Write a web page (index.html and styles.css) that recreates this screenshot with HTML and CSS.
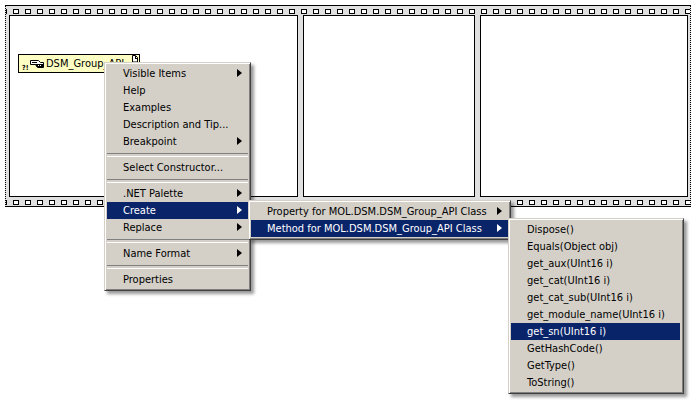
FILE: index.html
```html
<!DOCTYPE html>
<html>
    <head>
        <meta charset="utf-8">
        <title>DSM_Group_API</title>
        <link rel="stylesheet" href="styles.css">
    </head>
    <body>
        <div class="sequence">
            <div class="film"></div>
            <div class="frames">
                <div class="frame">
                    <div class="node">
                        <span class="nodeFlag">?!</span>
                        <svg class="nodeIcon" width="14" height="10" viewBox="0 0 14 10">
                            <path d="M0.5 1.5h8l2 2h3v5h-6l-2-3h-5z" fill="#fff" stroke="#000"/>
                            <path d="M5 5h8v3h-6zM2 3h5v1h-5z" fill="#000"/>
                            <path d="M8 6h1v1h-1zM10 6h1v1h-1z" fill="#fff"/>
                        </svg>
                        <span class="nodeName">DSM_Group_API</span>
                        <svg class="nodeDoc" width="7" height="8" viewBox="0 0 7 8">
                            <path d="M1.5 0.5h3l2 2v4.5h-5z" fill="#fff" stroke="#000"/>
                            <path d="M4 1h1v2h1v1h-2z" fill="#000"/>
                        </svg>
                    </div>
                </div>
                <div class="frame"></div>
                <div class="frame"></div>
            </div>
            <div class="film"></div>
        </div>

        <div class="menu mainMenu">
            <div class="item sub">Visible Items</div>
            <div class="item">Help</div>
            <div class="item">Examples</div>
            <div class="item">Description and Tip...</div>
            <div class="item sub">Breakpoint</div>
            <div class="sep"></div>
            <div class="item">Select Constructor...</div>
            <div class="sep"></div>
            <div class="item sub">.NET Palette</div>
            <div class="item sub active">Create</div>
            <div class="item sub">Replace</div>
            <div class="sep"></div>
            <div class="item sub">Name Format</div>
            <div class="sep"></div>
            <div class="item">Properties</div>
        </div>

        <div class="menu createMenu">
            <div class="item sub">Property for MOL.DSM.DSM_Group_API Class</div>
            <div class="item sub active">Method for MOL.DSM.DSM_Group_API Class</div>
        </div>

        <div class="menu methodMenu">
            <div class="item">Dispose()</div>
            <div class="item">Equals(Object obj)</div>
            <div class="item">get_aux(UInt16 i)</div>
            <div class="item">get_cat(UInt16 i)</div>
            <div class="item">get_cat_sub(UInt16 i)</div>
            <div class="item">get_module_name(UInt16 i)</div>
            <div class="item active">get_sn(UInt16 i)</div>
            <div class="item">GetHashCode()</div>
            <div class="item">GetType()</div>
            <div class="item">ToString()</div>
        </div>
    </body>
</html>
```

FILE: styles.css
```css
* {
    margin: 0;
    padding: 0;
    box-sizing: border-box;
}

body {
    background-color: white;
    font-family: 'DejaVu Sans Condensed', 'DejaVu Sans', sans-serif;
    font-stretch: condensed;
    font-size: 11px;
    color: #000;
    overflow: hidden;
}

.sequence {
    width: 686px;
    height: 202px;
    margin: 5px 0 0 5px;
    background-color: #e0e0e0;
    border-top: 1px solid #000;
    border-bottom: 1px solid #000;
    border-left: 1px dotted #000;
    border-right: 1px dotted #000;
    display: flex;
    flex-flow: column nowrap;
}

.film {
    flex: none;
    height: 9px;
    background-image:
        linear-gradient(90deg, transparent 1px, #fff 1px, #fff 5px, transparent 5px),
        linear-gradient(90deg, #000 6px, transparent 6px);
    background-size: 12px 3px, 12px 5px;
    background-position: 7px 4px, 7px 3px;
    background-repeat: repeat-x;
}

.frames {
    flex: none;
    height: 182px;
    padding-left: 3px;
    display: flex;
    flex-flow: row nowrap;
    gap: 5px;
}

.frame {
    width: 172px;
    background-color: white;
    border: 1px solid #000;
}
.frame:first-child {
    width: 289px;
}
.frame:last-child {
    width: 208px;
}

.node {
    width: 122px;
    height: 19px;
    margin: 38px 0 0 8px;
    padding-left: 3px;
    background-color: #ffffc4;
    border: 1px solid #000;
    display: flex;
    flex-flow: row nowrap;
    align-items: center;
    position: relative;
}
.nodeFlag {
    width: 8px;
    font-size: 7px;
    font-weight: bold;
    line-height: 7px;
    margin-top: 9px;
}
.nodeIcon {
    margin-right: 2px;
}
.nodeName {
    white-space: nowrap;
    line-height: 15px;
}
.nodeDoc {
    position: absolute;
    top: 0;
    right: 1px;
}

.menu {
    position: absolute;
    padding: 2px;
    background-color: #d4d0c8;
    border: 1px solid;
    border-color: #d4d0c8 #404040 #404040 #d4d0c8;
    box-shadow: inset 1px 1px 0 #fff, inset -1px -1px 0 #808080, 3px 3px 3px rgba(0, 0, 0, 0.4);
}
.mainMenu {
    left: 104px;
    top: 62px;
    width: 147px;
}
.createMenu {
    left: 248px;
    top: 200px;
    width: 263px;
}
.methodMenu {
    left: 508px;
    top: 218px;
    width: 176px;
    padding-right: 3px;
}

.item {
    height: 17px;
    padding-left: 16px;
    line-height: 18px;
    white-space: nowrap;
    position: relative;
}
.sub::after {
    content: '';
    position: absolute;
    right: 6px;
    top: 4px;
    border-left: 5px solid #000;
    border-top: 4px solid transparent;
    border-bottom: 4px solid transparent;
}
.active {
    background-color: #0a246a;
    color: white;
}
.active::after {
    border-left-color: white;
}

.sep {
    height: 9px;
    padding-top: 3px;
}
.sep::before {
    content: '';
    display: block;
    height: 2px;
    border-top: 1px solid #808080;
    border-bottom: 1px solid #fff;
}
```
